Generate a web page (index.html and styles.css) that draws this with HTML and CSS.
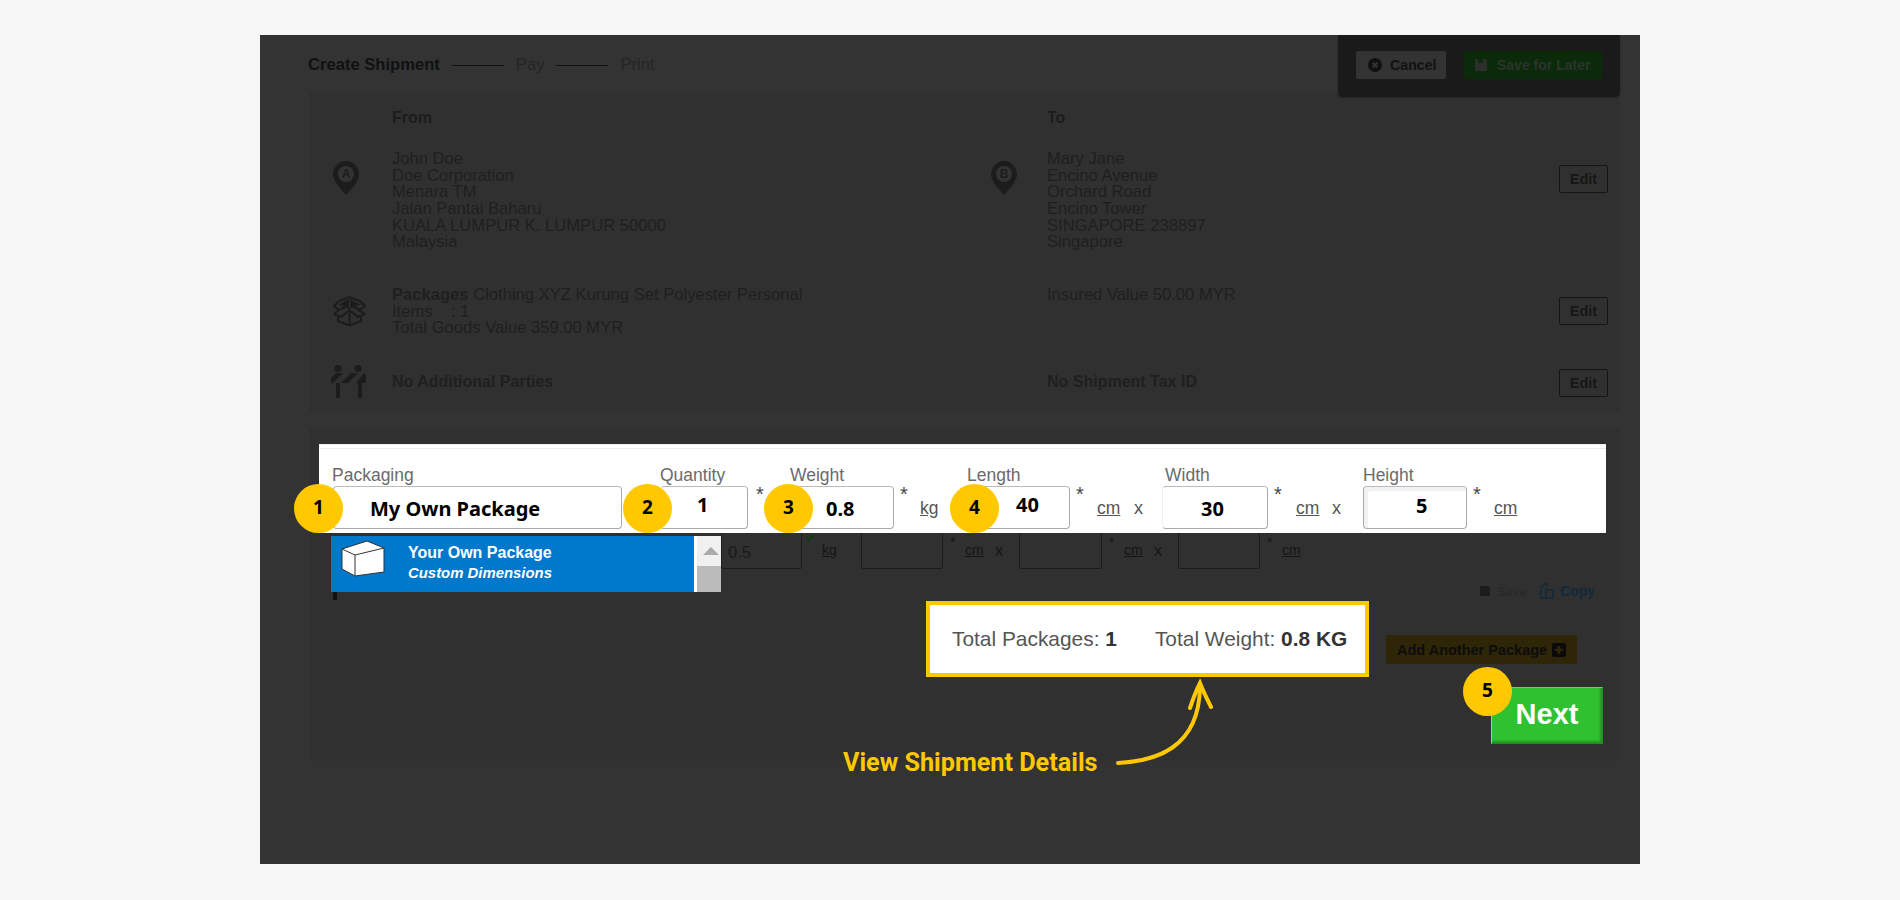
FILE: index.html
```html
<!DOCTYPE html>
<html lang="en">
<head>
<meta charset="utf-8">
<title>Create Shipment</title>
<link rel="stylesheet" href="styles.css">
</head>
<body>
<main class="frame">
  <header class="topbar">
    <nav class="steps">
      <span class="step-on">Create Shipment</span><i class="step-line"></i><span>Pay</span><i class="step-line"></i><span>Print</span>
    </nav>
    <div class="actions">
      <button class="btn-cancel"><svg class="ic16" viewBox="0 0 16 16"><circle cx="8" cy="8" r="7" fill="#111"/><path d="M5.500 5.500l5 5m0-5l-5 5" stroke="#333" stroke-width="2"/></svg>Cancel</button>
      <button class="btn-save"><svg class="ic14" viewBox="0 0 14 14"><path d="M1 1h10l2 2v10H1z" fill="#2e2e2e"/><path d="M4 1h5v4H4z" fill="#0c2a0c"/></svg>Save for Later</button>
    </div>
  </header>

  <section class="summary">
    <div class="row row-addr">
      <div class="cell-ic"><svg class="pin" viewBox="0 0 26 34"><path d="M13 0C6 0 0 6 0 13c0 8 8 15 13 21 5-6 13-13 13-21C26 6 20 0 13 0z" fill="#1c1c1c"/><circle cx="13" cy="13" r="8" fill="#333"/><text x="13" y="17" class="pin-t">A</text></svg></div>
      <div class="cell-main">
        <h3>From</h3>
        <p>John Doe<br>Doe Corporation<br>Menara TM<br>Jalan Pantai Baharu<br>KUALA LUMPUR K. LUMPUR 50000<br>Malaysia</p>
      </div>
      <div class="cell-ic cell-ic-b"><svg class="pin" viewBox="0 0 26 34"><path d="M13 0C6 0 0 6 0 13c0 8 8 15 13 21 5-6 13-13 13-21C26 6 20 0 13 0z" fill="#1c1c1c"/><circle cx="13" cy="13" r="8" fill="#333"/><text x="13" y="17" class="pin-t">B</text></svg></div>
      <div class="cell-to">
        <h3>To</h3>
        <p>Mary Jane<br>Encino Avenue<br>Orchard Road<br>Encino Tower<br>SINGAPORE 238897<br>Singapore</p>
      </div>
      <button class="btn-edit btn-edit-1">Edit</button>
    </div>
    <div class="row row-pack">
      <div class="cell-ic"><svg class="boxic" viewBox="0 0 33 30" fill="none" stroke="#1c1c1c" stroke-width="2"><path d="M16.500 1L6 5 1 10l5 4 10.500-5 10.500 5 5-4-5-5z"/><path d="M1 18l7 3 8.500-7 8.500 7 7-3-7-4"/><path d="M1 18l5-4"/><path d="M5 21v4l11.500 4.500L28 25v-4M16.500 14v15"/><path d="M16.500 4L25 8.500 16.500 12 8 8.500z" fill="#1c1c1c"/><path d="M16.500 4v8" stroke="#333" stroke-width="1"/></svg></div>
      <div class="cell-main"><p><b>Packages</b> Clothing XYZ Kurung Set Polyester Personal<br>Items &nbsp; &nbsp;: 1<br>Total Goods Value 359.00 MYR</p></div>
      <div class="cell-ic cell-ic-b"></div>
      <div class="cell-to"><p>Insured Value 50.00 MYR</p></div>
      <button class="btn-edit">Edit</button>
    </div>
    <div class="row row-part">
      <div class="cell-ic"><svg class="partic" viewBox="0 0 35 33" fill="#1c1c1c"><circle cx="7" cy="3.500" r="3.500"/><circle cx="27" cy="3.500" r="3.500"/><path d="M0 18v-5l5-5h7L2 18zM10 18L20 8h7L17 18zM25 18l8-10 2 2v8zM5 18h4v15H5zM27 18h4v15h-4z"/></svg></div>
      <div class="cell-main"><p class="strong">No Additional Parties</p></div>
      <div class="cell-ic cell-ic-b"></div>
      <div class="cell-to"><p class="strong">No Shipment Tax ID</p></div>
      <button class="btn-edit">Edit</button>
    </div>
  </section>

  <section class="packages">
    <div class="pk-row">
      <div class="pk-under pk-first"><span class="pk-under-v">0.5</span></div><i class="tick"></i><u class="unit u-kg">kg</u>
      <div class="pk-under pk-d1"></div><i class="star">*</i><u class="unit">cm</u><span class="times">x</span>
      <div class="pk-under"></div><i class="star">*</i><u class="unit">cm</u><span class="times">x</span>
      <div class="pk-under pk-d1"></div><i class="star">*</i><u class="unit">cm</u>
    </div>
    <div class="pk-links">
      <span class="link-save"><svg class="ic10" viewBox="0 0 10 10"><path d="M0 0h8l2 2v8H0z" fill="#1c1c1c"/></svg>Save</span>
      <span class="link-copy"><svg class="ic-copy" viewBox="0 0 14 16" fill="none" stroke="#10293a" stroke-width="1.500"><path d="M4 3H1v12h5M4 3V1h3v2M6 7h7v8H6z"/></svg>Copy</span>
    </div>
    <div class="pk-add"><button class="btn-add">Add Another Package<svg class="ic14" viewBox="0 0 14 14"><rect width="14" height="14" rx="2" fill="#0a0a0a"/><path d="M7 3v8M3 7h8" stroke="#2f2608" stroke-width="2.500"/></svg></button></div>
  </section>

  <!-- Tutorial highlights laid over the dimmed page -->
  <div class="band">
    <div class="f f-pack"><label>Packaging</label><div class="inp inp-pack">My Own Package</div></div>
    <div class="f f-qty"><label>Quantity</label><div class="inp inp-qty">1</div></div><i class="bstar">*</i>
    <div class="f f-wt"><label>Weight</label><div class="inp inp-wt">0.8</div></div><i class="bstar">*</i><u class="bunit bkg">kg</u>
    <div class="f f-len"><label>Length</label><div class="inp inp-len">40</div></div><i class="bstar">*</i><u class="bunit">cm</u><span class="btimes">x</span>
    <div class="f f-wid"><label>Width</label><div class="inp inp-wid">30</div></div><i class="bstar">*</i><u class="bunit">cm</u><span class="btimes">x</span>
    <div class="f f-hgt"><label>Height</label><div class="inp inp-hgt">5</div></div><i class="bstar">*</i><u class="bunit">cm</u>
  </div>

  <div class="drop">
    <svg class="drop-ic" viewBox="0 0 44 37" fill="#fff" stroke="#333" stroke-width="1"><path d="M1 9L26 1l17 7v24l-29 4-13-7z"/><path d="M1 9l13 6v21M14 15l29-7" fill="none"/></svg>
    <div class="drop-t"><b>Your Own Package</b><em>Custom Dimensions</em></div>
    <div class="drop-sb"><i class="sb-arrow"></i><i class="sb-thumb"></i></div>
  </div>
  <i class="drop-mark"></i>

  <div class="total">
    <span>Total Packages: <b>1</b></span><span>Total Weight: <b>0.8 KG</b></span>
  </div>

  <button class="next">Next</button>

  <span class="num n1">1</span><span class="num n2">2</span><span class="num n3">3</span><span class="num n4">4</span><span class="num n5">5</span>

  <svg class="arrow" viewBox="0 0 110 90" fill="none" stroke="#ffc800" stroke-width="4" stroke-linecap="round"><path d="M3 84C40 82 84 70 85 8"/><path d="M75 29C78 20 81 12 85 4 88 12 92 20 96 28"/></svg>
  <span class="view">View Shipment Details</span>
</main>
</body>
</html>
```
FILE: styles.css
```css
* { box-sizing: border-box; }
html, body { margin: 0; height: 100%; }
body { background: #f6f6f6; padding: 35px 260px 36px; font-family: "Liberation Sans", Arial, sans-serif; color: #1c1c1c; overflow: hidden; }
button { font-family: inherit; }
i { font-style: normal; }

.frame { position: relative; width: 1380px; height: 829px; background: #333; }

.topbar { height: 57px; padding-left: 48px; padding-right: 20px; display: flex; justify-content: space-between; }
.steps { display: flex; align-items: center; height: 60px; gap: 12px; font-size: 16.6px; color: #252525; }
.step-on { font-weight: 700; color: #111; }
.step-line { width: 52px; height: 1px; background: #111; }
.actions { width: 282px; height: 62px; background: #1a1a1a; border-radius: 0 0 5px 5px; display: flex; gap: 18px; padding: 16px 18px; box-shadow: 0 1px 2px rgba(0,0,0,.3); }
.btn-cancel, .btn-save { height: 28px; border: 0; border-radius: 2px; display: flex; align-items: center; font-size: 14.200px; font-weight: 700; padding: 0; }
.btn-cancel { width: 90px; background: #333; color: #121212; gap: 7px; padding-left: 11px; }
.btn-save { width: 138px; background: #0a2a0a; color: #2d332d; gap: 9px; padding-left: 10px; font-size: 14px; }
.ic16 { width: 16px; height: 16px; }
.ic14 { width: 14px; height: 14px; flex: none; }

.summary { margin: 0 20px 0 49px; height: 320px; background: #303030; }
.row { display: grid; grid-template-columns: 83px 599px 56px 512px 61px; position: relative; }
.row-addr { height: 177px; padding-top: 16px; }
.row-pack { height: 72px; padding-top: 18px; }
.row-part { height: 71px; }
h3 { margin: 0 0 23px; font-size: 16px; line-height: 20px; font-weight: 700; color: #1c1c1c; }
p { margin: 0; font-size: 16.6px; line-height: 16.67px; color: #1f1f1f; white-space: nowrap; }
.strong { font-weight: 700; font-size: 16px; margin-top: 33px; }
.cell-ic { padding-left: 24px; }
.cell-ic-b { padding-left: 0; }
.row-addr .cell-ic { padding-top: 53px; }
.row-pack .cell-ic { padding-top: 9px; }
.row-part .cell-ic { padding-top: 24px; }
.pin { width: 26px; height: 34px; display: block; }
.pin-t { font-size: 12px; font-weight: 700; fill: #1c1c1c; text-anchor: middle; font-family: "Liberation Sans", sans-serif; }
.boxic { width: 33px; height: 30px; display: block; }
.partic { width: 35px; height: 33px; display: block; margin-left: -2px; }
.btn-edit { width: 49px; height: 28px; background: transparent; border: 1px solid #151515; border-radius: 2px; color: #161616; font-size: 14.500px; font-weight: 700; padding: 0; }
.btn-edit-1 { margin-top: 57px; }
.row-pack .btn-edit { margin-top: 10px; }
.row-part .btn-edit { margin-top: 28px; }

.packages { margin: 16px 20px 0 49px; height: 333px; background: #303030; position: relative; padding-top: 104px; }
.pk-row { display: flex; align-items: flex-start; height: 50px; padding-left: 412px; }
.pk-under { width: 83px; height: 37px; border: 1px solid #1c1c1c; border-radius: 2px; flex: none; }
.pk-first { width: 81px; }
.pk-d1 { width: 82px; }
.pk-under-v { display: block; padding: 10px 0 0 6px; font-size: 16.6px; color: #1a1a1a; }
.tick { width: 8px; height: 5px; border-left: 2px solid #0d3f0d; border-bottom: 2px solid #0d3f0d; transform: rotate(-45deg); margin: 2px 8px 0 4px; flex: none; }
.star { width: 20px; padding-left: 7px; font-size: 14px; color: #151515; margin-top: 2px; flex: none; }
.unit { font-size: 14px; color: #151515; margin: 10px 0 0 2px; flex: none; width: 30px; }
.u-kg { margin-left: 0; width: 39px; }
.times { font-size: 16px; color: #151515; margin: 10px 16px 0 0; flex: none; width: 8px; }
.pk-links { display: flex; justify-content: flex-end; gap: 13px; padding-right: 25px; font-size: 13px; font-weight: 700; height: 18px; }
.link-save { color: #292929; display: flex; gap: 7px; align-items: center; }
.link-copy { color: #10293a; display: flex; gap: 6px; align-items: center; font-size: 14px; }
.ic10 { width: 10px; height: 10px; }
.ic-copy { width: 14px; height: 16px; }
.pk-add { display: flex; justify-content: flex-end; padding-right: 43px; margin-top: 35px; }
.btn-add { width: 191px; height: 29px; background: #2f2608; border: 0; border-radius: 2px; display: flex; align-items: center; gap: 5px; padding-left: 11px; font-size: 14.500px; font-weight: 700; color: #0d0d0d; white-space: nowrap; }

.band { position: absolute; left: 59px; top: 409px; width: 1287px; height: 89px; background: #fff; border-top: 1px solid #eee; box-shadow: inset 0 3px 0 #fff, inset 0 4px 0 #eee; color: #666; }
.f { position: absolute; top: 0; }
.f label { position: absolute; left: 0; top: 20px; font-size: 17.500px; line-height: 20px; color: #6b6b6b; white-space: nowrap; }
.inp { position: absolute; top: 41px; height: 43px; background: #fff; border: 1px solid #aaa; border-top-color: #bbb; border-left-color: #eee; border-radius: 4px; font-family: "Noto Sans", sans-serif; font-weight: 700; color: #000; font-size: 20px; white-space: nowrap; }
.f-pack { left: 13px; } .inp-pack { left: 1px; width: 289px; padding: 8px 0 0 36px; border-left-color: #aaa; }
.f-qty { left: 341px; } .inp-qty { left: 0; width: 88px; padding: 4px 0 0 36px; }
.f-wt { left: 471px; } .inp-wt { left: 0; width: 104px; padding: 8px 0 0 35px; }
.f-len { left: 648px; } .inp-len { left: 0; width: 103px; padding: 4px 0 0 48px; }
.f-wid { left: 846px; } .inp-wid { left: -3px; width: 106px; padding: 8px 0 0 38px; }
.f-hgt { left: 1044px; } .inp-hgt { left: 0; width: 104px; padding: 5px 0 0 52px; border-left-color: #aaa; box-shadow: inset 4px 4px 0 #f2f2f2; }
.bstar, .bunit, .btimes { position: absolute; color: #666; }
.bstar { top: 38px; font-size: 20px; color: #444; }
.bunit { top: 53px; font-size: 17.500px; color: #555; }
.btimes { top: 53px; font-size: 18px; color: #555; }
.f-qty + .bstar { left: 437px; }
.f-wt + .bstar { left: 581px; }
.bkg { left: 601px; }
.f-len + .bstar { left: 757px; }
.f-len + .bstar + .bunit { left: 778px; }
.f-len + .bstar + .bunit + .btimes { left: 815px; }
.f-wid + .bstar { left: 955px; }
.f-wid + .bstar + .bunit { left: 977px; }
.f-wid + .bstar + .bunit + .btimes { left: 1013px; }
.f-hgt + .bstar { left: 1154px; }
.f-hgt + .bstar + .bunit { left: 1175px; }

.drop { position: absolute; left: 71px; top: 501px; width: 390px; height: 56px; background: #0078cc; display: flex; color: #fff; }
.drop-ic { width: 44px; height: 37px; margin: 4px 0 0 10px; flex: none; }
.drop-t { margin: 8px 0 0 23px; width: 286px; display: flex; flex-direction: column; gap: 4px; font-size: 16px; line-height: 17px; }
.drop-t b { font-weight: 700; }
.drop-t em { font-weight: 700; font-style: italic; font-size: 14.900px; }
.drop-sb { width: 27px; border-left: 3px solid #fff; background: #f0f0f0; flex: none; margin-left: auto; position: relative; }
.sb-arrow { position: absolute; left: 6px; top: 11px; width: 0; height: 0; border: 8px solid transparent; border-top: 0; border-bottom: 8px solid #aaa; }
.sb-thumb { position: absolute; left: 0; right: 0; top: 30px; bottom: 0; background: #bbb; }
.drop-mark { position: absolute; left: 73px; top: 557px; width: 4px; height: 8px; background: #111; }

.total { position: absolute; left: 666px; top: 566px; width: 443px; height: 76px; background: #fff; border: 4px solid #ffc800; display: flex; gap: 38px; padding-left: 22px; align-items: center; font-size: 20.900px; color: #555; white-space: nowrap; }
.total b { color: #333; }

.next { position: absolute; left: 1231px; top: 652px; width: 112px; height: 57px; background: #2fc12f; color: #fff; font-size: 29px; font-weight: 700; border: 1px solid; border-color: #5ed65e #1d8f1d #1d8f1d #bcbcbc; padding: 0 0 3px; box-shadow: inset -2px -2px 2px rgba(0,80,0,.35); }

.num { position: absolute; top: 449px; width: 49px; height: 49px; border-radius: 50%; background: #ffc800; color: #000; font-family: "Noto Sans", sans-serif; font-weight: 700; font-size: 19px; line-height: 46px; text-align: center; }
.n1 { left: 34px; } .n2 { left: 363px; } .n3 { left: 504px; } .n4 { left: 690px; }
.n5 { left: 1203px; top: 632px; }

.arrow { position: absolute; left: 855px; top: 644px; width: 110px; height: 90px; }
.view { position: absolute; left: 583px; top: 714px; font-family: Roboto, sans-serif; font-weight: 700; font-size: 25.200px; line-height: 28px; color: #ffc800; white-space: nowrap; }
```
